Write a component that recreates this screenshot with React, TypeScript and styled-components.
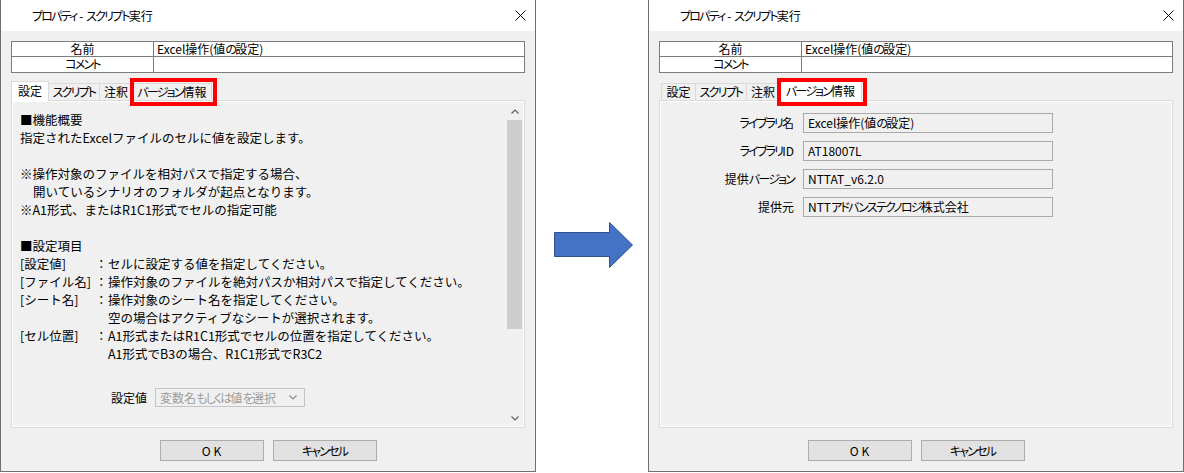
import React from "react";
import styled, { createGlobalStyle } from "styled-components";

const GlobalStyle = createGlobalStyle`
  html, body {
    margin: 0;
    padding: 0;
    background: #ffffff;
  }
  body {
    font-family: "Noto Sans CJK JP", "Noto Sans", sans-serif;
    font-size: 12px;
    color: #000000;
  }
  * {
    box-sizing: border-box;
  }
`;

const Page = styled.div`
  display: flex;
  width: 1184px;
  height: 473px;
  overflow: hidden;
  background: #ffffff;
`;

const Window = styled.div`
  flex-shrink: 0;
  display: flex;
  flex-direction: column;
  width: 536px;
  height: 472px;
  border: 1px solid #6f6f6f;
  border-top: none;
  background: #f0f0f0;
  font-feature-settings: "palt";
`;

// the dialog font (Meiryo UI) has much narrower kana than Noto
const Kana = styled.span`
  letter-spacing: -1.8px;
`;

const TitleBar = styled.div`
  display: flex;
  align-items: center;
  justify-content: space-between;
  height: 31px;
  padding: 0 9px 0 31px;
  background: #ffffff;
`;

const Body = styled.div`
  display: flex;
  flex-direction: column;
  padding: 10px 10px 0;
`;

const PropTable = styled.div`
  display: grid;
  grid-template-columns: 142px 1fr;
  border: 1px solid #7c7c7c;
  background: #ffffff;
`;

const PropCell = styled.div<{ $label?: boolean; $first?: boolean }>`
  height: 15px;
  line-height: 14px;
  padding-left: ${(p) => (p.$label ? 0 : 3)}px;
  text-align: ${(p) => (p.$label ? "center" : "left")};
  border-right: ${(p) => (p.$label ? "1px solid #7c7c7c" : "none")};
  border-bottom: ${(p) => (p.$first ? "1px solid #7c7c7c" : "none")};
  white-space: nowrap;
`;

const TabStrip = styled.div`
  display: flex;
  align-items: flex-end;
  height: 19px;
  margin-top: 8px;
  padding-left: 2px;
`;

const Tab = styled.div<{ $w: number; $active?: boolean; $marked?: boolean }>`
  position: relative;
  z-index: ${(p) => (p.$active ? 1 : 0)};
  width: ${(p) => p.$w + (p.$active ? 3 : 0)}px;
  height: ${(p) => (p.$active ? 20 : 17)}px;
  margin: ${(p) => (p.$active ? "0 0 -1px -2px" : "0")};
  border: 1px solid #d9d9d9;
  border-bottom: none;
  background: ${(p) => (p.$active ? "#ffffff" : "#f0f0f0")};
  text-align: center;
  line-height: ${(p) => (p.$active ? 17 : 15)}px;
  white-space: nowrap;

  & + & {
    margin-left: -1px;
  }

  &::after {
    content: "";
    display: ${(p) => (p.$marked ? "block" : "none")};
    position: absolute;
    top: ${(p) => (p.$active ? -4 : -6)}px;
    left: -3px;
    right: -6px;
    bottom: ${(p) => (p.$active ? -5 : -6)}px;
    border: 4px solid #ff0000;
  }
`;

const Panel = styled.div`
  display: flex;
  height: 328px;
  border: 1px solid #d9d9d9;
  box-shadow: inset 0 0 0 1px #ffffff;
`;

const Doc = styled.div`
  flex: 1;
  padding: 10px 0 0 8px;
  font-size: 12.5px;
  font-feature-settings: normal;
  line-height: 18px;
`;

const Line = styled.div<{ $indent?: boolean }>`
  min-height: 18px;
  padding-left: ${(p) => (p.$indent ? 13 : 0)}px;
  white-space: pre;
`;

const ItemGrid = styled.div`
  display: grid;
  grid-template-columns: 75px 13px auto;
`;

const ItemText = styled.div`
  white-space: pre;
`;

const ComboRow = styled.div`
  display: flex;
  align-items: center;
  gap: 8px;
  margin-top: 25px;
  padding-left: 91px;
  font-size: 12px;
  font-feature-settings: "palt";
`;

const Combo = styled.div`
  display: flex;
  align-items: center;
  justify-content: space-between;
  width: 150px;
  height: 19px;
  padding: 0 7px 0 4px;
  border: 1px solid #c4c4c4;
  color: #9d9d9d;
  white-space: nowrap;
`;

const ScrollBar = styled.div`
  display: flex;
  flex-direction: column;
  width: 17px;
  margin: 2px 1px 0 0;
`;

const ScrollArrow = styled.div`
  display: flex;
  align-items: center;
  justify-content: center;
  height: 17px;
`;

const Thumb = styled.div`
  height: 209px;
  margin: 0 1px;
  background: #cdcdcd;
`;

const Track = styled.div`
  flex: 1;
`;

const InfoGrid = styled.div`
  display: grid;
  grid-template-columns: 134px 250px;
  grid-auto-rows: 20px;
  column-gap: 9px;
  row-gap: 8px;
  align-content: start;
  padding-top: 12px;
`;

const InfoLabel = styled.div`
  text-align: right;
  line-height: 20px;
  white-space: nowrap;
`;

const InfoField = styled.div`
  padding-left: 4px;
  border: 1px solid #a9a9a9;
  line-height: 18px;
  white-space: nowrap;
`;

const ButtonRow = styled.div`
  display: flex;
  justify-content: center;
  gap: 9px;
  margin-top: 12px;
`;

const Button = styled.div<{ $spaced?: boolean }>`
  width: 104px;
  height: 21px;
  border: 1px solid #adadad;
  background: #e1e1e1;
  text-align: center;
  line-height: 19px;
  letter-spacing: ${(p) => (p.$spaced ? "3px" : "normal")};
  text-indent: ${(p) => (p.$spaced ? "3px" : "0")};
`;

const ArrowColumn = styled.div`
  flex: 1;
  padding: 222px 0 0 18px;
`;

const KANA_RUN = /([\u3040-\u30ff]+)/;

const narrow = (text: string) =>
  text.split(KANA_RUN).map((part, i) => (i % 2 ? <Kana key={i}>{part}</Kana> : part));

const CloseIcon = () => (
  <svg width="11" height="11" viewBox="0 0 11 11">
    <path d="M0.5 0.5 L10.5 10.5 M10.5 0.5 L0.5 10.5" stroke="#000" strokeWidth="1" />
  </svg>
);

const Chevron = ({ up, color }: { up?: boolean; color: string }) => (
  <svg width="8" height="5" viewBox="0 0 8 5">
    <path
      d={up ? "M0.5 4.5 L4 1 L7.5 4.5" : "M0.5 0.5 L4 4 L7.5 0.5"}
      fill="none"
      stroke={color}
      strokeWidth="1.2"
    />
  </svg>
);

const tabs = [
  { name: "設定", w: 35 },
  { name: "スクリプト", w: 52 },
  { name: "注釈", w: 34 },
  { name: "バージョン情報", w: 80 },
];

const items = [
  { label: "[設定値]", lines: ["セルに設定する値を指定してください。"] },
  { label: "[ファイル名]", lines: ["操作対象のファイルを絶対パスか相対パスで指定してください。"] },
  {
    label: "[シート名]",
    lines: ["操作対象のシート名を指定してください。", "空の場合はアクティブなシートが選択されます。"],
  },
  {
    label: "[セル位置]",
    lines: ["A1形式またはR1C1形式でセルの位置を指定してください。", "A1形式でB3の場合、R1C1形式でR3C2"],
  },
];

const info = [
  { label: "ライブラリ名", value: "Excel操作(値の設定)" },
  { label: "ライブラリID", value: "AT18007L" },
  { label: "提供バージョン", value: "NTTAT_v6.2.0" },
  { label: "提供元", value: "NTTアドバンステクノロジ株式会社" },
];

const Dialog: React.FC<{ activeTab: number; children: React.ReactNode }> = ({ activeTab, children }) => (
  <Window>
    <TitleBar>
      <span>{narrow("プロパティ - スクリプト実行")}</span>
      <CloseIcon />
    </TitleBar>
    <Body>
      <PropTable>
        <PropCell $label $first>名前</PropCell>
        <PropCell $first>{narrow("Excel操作(値の設定)")}</PropCell>
        <PropCell $label>{narrow("コメント")}</PropCell>
        <PropCell />
      </PropTable>
      <TabStrip>
        {tabs.map((tab, i) => (
          <Tab key={tab.name} $w={tab.w} $active={i === activeTab} $marked={i === 3}>
            {narrow(tab.name)}
          </Tab>
        ))}
      </TabStrip>
      <Panel>{children}</Panel>
      <ButtonRow>
        <Button $spaced>OK</Button>
        <Button>{narrow("キャンセル")}</Button>
      </ButtonRow>
    </Body>
  </Window>
);

const App: React.FC = () => {
  return (
    <>
      <GlobalStyle />
      <Page>
        <Dialog activeTab={0}>
          <Doc>
            <Line>■機能概要</Line>
            <Line>指定されたExcelファイルのセルに値を設定します。</Line>
            <Line />
            <Line>※操作対象のファイルを相対パスで指定する場合、</Line>
            <Line $indent>開いているシナリオのフォルダが起点となります。</Line>
            <Line>※A1形式、またはR1C1形式でセルの指定可能</Line>
            <Line />
            <Line>■設定項目</Line>
            <ItemGrid>
              {items.map((item) => (
                <React.Fragment key={item.label}>
                  <div>{item.label}</div>
                  <div>：</div>
                  <ItemText>{item.lines.join("\n")}</ItemText>
                </React.Fragment>
              ))}
            </ItemGrid>
            <ComboRow>
              <span>設定値</span>
              <Combo>
                <span>{narrow("変数名もしくは値を選択")}</span>
                <Chevron color="#8a8a8a" />
              </Combo>
            </ComboRow>
          </Doc>
          <ScrollBar>
            <ScrollArrow>
              <Chevron up color="#606060" />
            </ScrollArrow>
            <Thumb />
            <Track />
            <ScrollArrow>
              <Chevron color="#606060" />
            </ScrollArrow>
          </ScrollBar>
        </Dialog>

        <ArrowColumn>
          <svg width="80" height="47" viewBox="0 0 80 47">
            <polygon
              points="0.5,10.5 55.5,10.5 55.5,0.5 78.5,23 55.5,45.5 55.5,34.5 0.5,34.5"
              fill="#4472c4"
              stroke="#2f528f"
              strokeWidth="1"
            />
          </svg>
        </ArrowColumn>

        <Dialog activeTab={3}>
          <InfoGrid>
            {info.map((row) => (
              <React.Fragment key={row.label}>
                <InfoLabel>{narrow(row.label)}</InfoLabel>
                <InfoField>{narrow(row.value)}</InfoField>
              </React.Fragment>
            ))}
          </InfoGrid>
        </Dialog>
      </Page>
    </>
  );
};

export default App;
